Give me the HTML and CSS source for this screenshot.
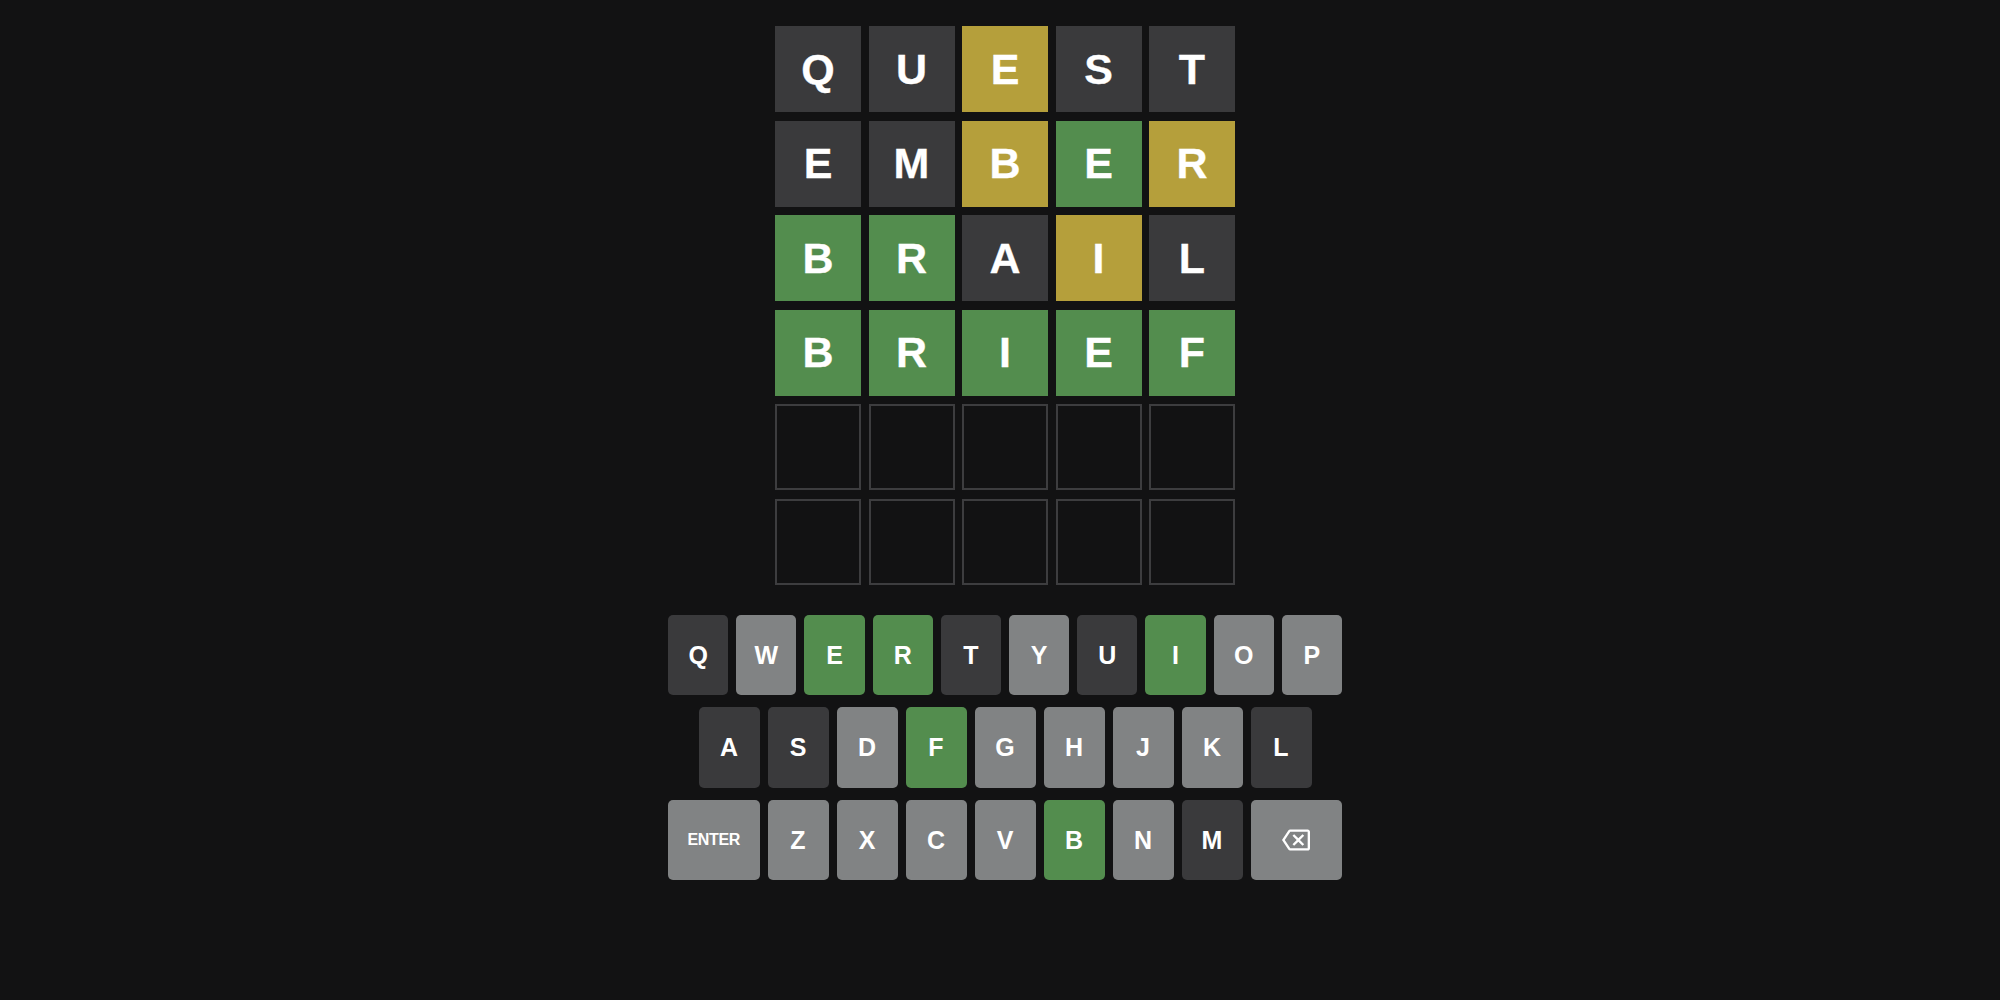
FILE: index.html
```html
<!DOCTYPE html>
<html lang="en">
<head>
<meta charset="utf-8">
<title>Wordle</title>
<link rel="stylesheet" href="styles.css">
</head>
<body>
<main class="game">
  <div class="board">
    <div class="tile absent">Q</div><div class="tile absent">U</div><div class="tile present">E</div><div class="tile absent">S</div><div class="tile absent">T</div>
    <div class="tile absent">E</div><div class="tile absent">M</div><div class="tile present">B</div><div class="tile correct">E</div><div class="tile present">R</div>
    <div class="tile correct">B</div><div class="tile correct">R</div><div class="tile absent">A</div><div class="tile present">I</div><div class="tile absent">L</div>
    <div class="tile correct">B</div><div class="tile correct">R</div><div class="tile correct">I</div><div class="tile correct">E</div><div class="tile correct">F</div>
    <div class="tile empty"></div><div class="tile empty"></div><div class="tile empty"></div><div class="tile empty"></div><div class="tile empty"></div>
    <div class="tile empty"></div><div class="tile empty"></div><div class="tile empty"></div><div class="tile empty"></div><div class="tile empty"></div>
  </div>
  <div class="keyboard">
    <div class="krow">
      <button class="key absent">Q</button><button class="key">W</button><button class="key correct">E</button><button class="key correct">R</button><button class="key absent">T</button><button class="key">Y</button><button class="key absent">U</button><button class="key correct">I</button><button class="key">O</button><button class="key">P</button>
    </div>
    <div class="krow mid">
      <button class="key absent">A</button><button class="key absent">S</button><button class="key">D</button><button class="key correct">F</button><button class="key">G</button><button class="key">H</button><button class="key">J</button><button class="key">K</button><button class="key absent">L</button>
    </div>
    <div class="krow">
      <button class="key wide enter">ENTER</button><button class="key">Z</button><button class="key">X</button><button class="key">C</button><button class="key">V</button><button class="key correct">B</button><button class="key">N</button><button class="key absent">M</button>
      <button class="key wide" aria-label="backspace"><svg class="bksp" viewBox="0 0 24 24" width="28" height="28"><path fill="#ffffff" d="M22 3H7c-.69 0-1.230.35-1.59.88L0 12l5.41 8.11c.36.53.9.89 1.59.89h15c1.1 0 2-.9 2-2V5c0-1.1-.9-2-2-2zm0 16H7.07L2.4 12l4.66-7H22v14zm-11.590-2L14 13.41 17.59 17 19 15.59 15.41 12 19 8.41 17.59 7 14 10.59 10.41 7 9 8.41 12.59 12 9 15.59z"/></svg></button>
    </div>
  </div>
</main>
</body>
</html>
```
FILE: styles.css
```css
html, body {
  margin: 0;
  padding: 0;
  background: #121213;
  height: 100%;
}
.game {
  display: flex;
  flex-direction: column;
  align-items: center;
  padding: 26px 0 0 10px;
  font-family: "Liberation Sans", Arial, sans-serif;
  color: #ffffff;
}
.board {
  display: grid;
  grid-template-columns: repeat(5, 86px);
  grid-auto-rows: 86px;
  column-gap: 7.5px;
  row-gap: 8.6px;
}
.tile {
  box-sizing: border-box;
  display: flex;
  align-items: center;
  justify-content: center;
  font-size: 43px;
  font-weight: 700;
  line-height: 1;
  -webkit-text-stroke: 0.3px #ffffff;
}
.tile.absent { background: #3a3a3c; }
.tile.present { background: #b59f3b; }
.tile.correct { background: #538d4e; }
.tile.empty { border: 2px solid #3d3d3f; }
.keyboard {
  margin-top: 30px;
  width: 674px;
  display: flex;
  flex-direction: column;
  gap: 12px;
}
.krow {
  display: flex;
  gap: 8px;
}
.krow.mid {
  padding: 0 30.5px;
}
.key {
  flex: 1 1 0;
  min-width: 0;
  height: 80.5px;
  border: 0;
  border-radius: 5px;
  padding: 0;
  margin: 0;
  background: #818384;
  color: #ffffff;
  font-family: "Liberation Sans", Arial, sans-serif;
  font-size: 25px;
  font-weight: 700;
  display: flex;
  align-items: center;
  justify-content: center;
}
.key.absent { background: #3a3a3c; }
.key.correct { background: #538d4e; }
.key.wide { flex: 1.5 1 0; }
.key.enter {
  font-size: 16px;
  letter-spacing: -0.3px;
}
.bksp { display: block; }
```
